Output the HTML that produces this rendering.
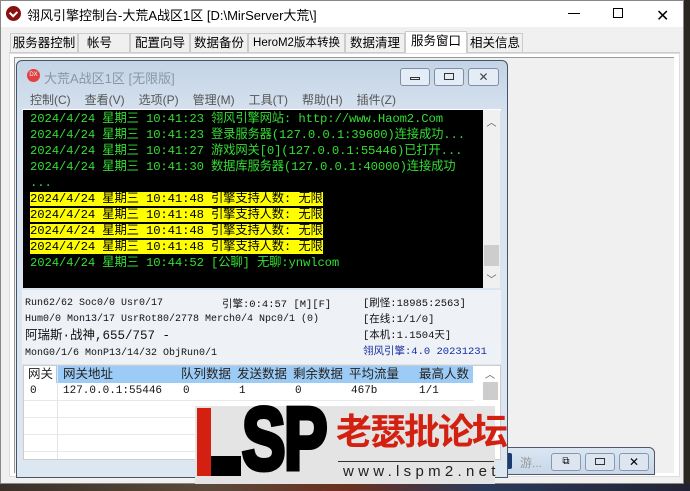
<!DOCTYPE html>
<html><head><meta charset="utf-8"><style>
*{margin:0;padding:0;box-sizing:border-box}
body{width:690px;height:491px;overflow:hidden;background:#2a2620;font-family:"Liberation Sans","Noto Sans CJK SC",sans-serif;position:relative}
.abs{position:absolute}
.mono{font-family:"Liberation Mono","Noto Sans CJK SC",monospace}
.tab{position:absolute;top:33px;height:20px;border:1px solid #ccc;border-bottom:none;font-size:12.5px;white-space:nowrap;text-align:center;line-height:18px}
</style></head><body>
<div class="abs" style="left:0;top:484px;width:690px;height:7px;background:linear-gradient(90deg,#3a3028,#5a4a3a 30%,#6a3020 50%,#2a3a5a 70%,#223)"></div>
<div class="abs" style="left:0;top:0;width:684px;height:484px;background:#f0f0f0;border:1px solid #888"></div>
<div class="abs" style="left:1px;top:1px;width:682px;height:26px;background:#fff"></div>
<div class="abs" style="left:6px;top:6px;width:15px;height:15px;border-radius:50%;background:#8a1010"></div>
<div class="abs" style="left:10px;top:10px;width:7px;height:6px;border-left:2px solid #fff;border-bottom:2px solid #fff;transform:rotate(-45deg)"></div>
<div class="abs" style="left:27px;top:5px;font-size:13px;color:#000">翎风引擎控制台-大荒A战区1区 [D:\MirServer大荒\]</div>
<div class="abs" style="left:568px;top:13px;width:12px;height:1px;background:#000"></div>
<div class="abs" style="left:613px;top:8px;width:10px;height:10px;border:1px solid #000"></div>
<div class="abs" style="left:656px;top:6px;font-size:16px;color:#000">✕</div>
<div class="abs" style="left:9px;top:52px;width:671px;height:1px;background:#ccc"></div>
<div class="tab" style="left:10px;width:68px">服务器控制</div>
<div class="tab" style="left:78px;width:52px;text-align:left;padding-left:8px">帐号</div>
<div class="tab" style="left:130px;width:60px">配置向导</div>
<div class="tab" style="left:190px;width:58px">数据备份</div>
<div class="tab" style="left:248px;width:97px;font-size:11.5px">HeroM2版本转换</div>
<div class="tab" style="left:345px;width:60px">数据清理</div>
<div class="tab" style="left:405px;width:62px;top:31px;height:22px;background:#fff">服务窗口</div>
<div class="tab" style="left:467px;width:56px">相关信息</div>
<div class="abs" style="left:9px;top:53px;width:671px;height:424px;border:1px solid #ddd;background:#fff"></div>
<div class="abs" style="left:14px;top:57px;width:660px;height:416px;border-top:1px solid #999;border-left:1px solid #999;background:#f0f0f0"></div>
<div class="abs" style="left:495px;top:447px;width:160px;height:28px;border:1px solid #556;border-radius:0 6px 0 0;background:linear-gradient(#dbe6f2,#c8d7e8)"></div>
<div class="abs" style="left:500px;top:453px;width:12px;height:16px;background:#1a3a70;border-radius:2px"></div>
<div class="abs" style="left:520px;top:454px;font-size:12px;color:#999">游...</div>
<div class="abs" style="left:551px;top:453px;width:30px;height:18px;border:1px solid #8898b0;border-radius:3px;background:#dde6f0;font-size:10px;text-align:center;line-height:16px">⧉</div>
<div class="abs" style="left:585px;top:453px;width:30px;height:18px;border:1px solid #8898b0;border-radius:3px;background:#dde6f0"></div>
<div class="abs" style="left:595px;top:458px;width:10px;height:7px;border:1px solid #333"></div>
<div class="abs" style="left:619px;top:453px;width:30px;height:18px;border:1px solid #8898b0;border-radius:3px;background:#dde6f0;font-size:12px;text-align:center;line-height:16px">✕</div>
<div class="abs" style="left:16px;top:60px;width:492px;height:418px;border:1px solid #44556a;border-radius:6px 6px 0 0;background:linear-gradient(#c4d4e6,#d8e3ef 60px,#dde7f1)"></div>
<div class="abs" style="left:27px;top:69px;width:13px;height:13px;border-radius:50%;background:#e04040;font-size:6px;color:#fff;text-align:center;line-height:13px">DX</div>
<div class="abs" style="left:44px;top:68px;font-size:13px;color:#8a96a6">大荒A战区1区 [无限版]</div>
<div class="abs" style="left:400px;top:68px;width:30px;height:18px;border:1px solid #7d8ea6;border-radius:3px;background:#e4ecf5"></div>
<div class="abs" style="left:410px;top:77px;width:10px;height:3px;border:1px solid #333"></div>
<div class="abs" style="left:434px;top:68px;width:30px;height:18px;border:1px solid #7d8ea6;border-radius:3px;background:#e4ecf5"></div>
<div class="abs" style="left:444px;top:73px;width:10px;height:7px;border:1px solid #333"></div>
<div class="abs" style="left:468px;top:68px;width:31px;height:18px;border:1px solid #7d8ea6;border-radius:3px;background:#e4ecf5;font-size:12px;text-align:center;line-height:16px;color:#444">✕</div>
<div class="abs" style="left:30px;top:91px;font-size:12px;color:#555;display:flex;gap:14px">
<span>控制(C)</span><span>查看(V)</span><span>选项(P)</span><span>管理(M)</span><span>工具(T)</span><span>帮助(H)</span><span>插件(Z)</span></div>
<div class="abs" style="left:22px;top:109px;width:479px;height:2px;background:#fff"></div>
<div class="abs" style="left:23px;top:110px;width:460px;height:178px;background:#000"></div>
<div class="abs" style="left:483px;top:110px;width:17px;height:178px;background:#f0f0f0;font-size:10px;color:#555;text-align:center"><div style="margin-top:4px">︿</div><div style="position:absolute;top:135px;left:1px;width:15px;height:21px;background:#cdcdcd"></div><div style="position:absolute;bottom:2px;width:17px">﹀</div></div>
<div class="abs mono" style="left:30px;top:111px;font-size:12.3px;letter-spacing:-0.15px;line-height:16px;color:#33dd33;white-space:pre">2024/4/24 星期三 10:41:23 翎风引擎网站: http://www.Haom2.Com
2024/4/24 星期三 10:41:23 登录服务器(127.0.0.1:39600)连接成功...
2024/4/24 星期三 10:41:27 游戏网关[0](127.0.0.1:55446)已打开...
2024/4/24 星期三 10:41:30 数据库服务器(127.0.0.1:40000)连接成功
...
<span style="background:#ffff00;color:#000">2024/4/24 星期三 10:41:48 引擎支持人数: 无限</span>
<span style="background:#ffff00;color:#000">2024/4/24 星期三 10:41:48 引擎支持人数: 无限</span>
<span style="background:#ffff00;color:#000">2024/4/24 星期三 10:41:48 引擎支持人数: 无限</span>
<span style="background:#ffff00;color:#000">2024/4/24 星期三 10:41:48 引擎支持人数: 无限</span>
2024/4/24 星期三 10:44:52 [公聊] 无聊:ynwlcom</div>
<div class="abs" style="left:22px;top:290px;width:479px;height:74px;background:#eef2f6"></div>
<div class="abs mono" style="left:25px;top:296px;font-size:10px;line-height:16px;color:#111;white-space:pre">Run62/62 Soc0/0 Usr0/17
Hum0/0 Mon13/17 UsrRot80/2778 Merch0/4 Npc0/1 (0)
<span style="font-size:12.5px">阿瑞斯·战神,655/757 -</span>
MonG0/1/6 MonP13/14/32 ObjRun0/1</div>
<div class="abs mono" style="left:222px;top:296px;font-size:10.5px;color:#111">引擎:0:4:57 [M][F]</div>
<div class="abs mono" style="left:363px;top:296px;font-size:10.5px;line-height:16px;color:#111;white-space:pre">[刷怪:18985:2563]
[在线:1/1/0]
[本机:1.1504天]
<span style="color:#1a2ea0">翎风引擎:4.0 20231231</span></div>
<div class="abs" style="left:23px;top:365px;width:478px;height:95px;background:#fff;border:1px solid #ccc"></div>
<div class="abs" style="left:56px;top:366px;width:417px;height:17px;background:#9ccbf5"></div>
<div class="abs" style="left:24px;top:366px;font-size:12.5px;color:#222;display:flex;height:17px;line-height:17px;white-space:nowrap">
<span style="width:33px;padding-left:4px">网关</span><span style="width:122px;padding-left:6px">网关地址</span><span style="width:56px;padding-left:2px">队列数据</span><span style="width:56px;padding-left:2px">发送数据</span><span style="width:56px;padding-left:2px">剩余数据</span><span style="width:66px;padding-left:2px">平均流量</span><span style="width:60px;padding-left:6px">最高人数</span></div>
<div class="abs mono" style="left:24px;top:383px;font-size:11px;display:flex;height:17px;line-height:17px;color:#111">
<span style="width:33px;padding-left:6px">0</span><span style="width:122px;padding-left:6px">127.0.0.1:55446</span><span style="width:56px;padding-left:4px">0</span><span style="width:56px;padding-left:4px">1</span><span style="width:56px;padding-left:4px">0</span><span style="width:66px;padding-left:4px">467b</span><span style="width:60px;padding-left:6px">1/1</span></div>
<div class="abs" style="left:57px;top:366px;width:1px;height:93px;background:#e4e4e4"></div>
<div class="abs" style="left:24px;top:400px;width:450px;height:1px;background:#e8e8e8"></div>
<div class="abs" style="left:24px;top:417px;width:450px;height:1px;background:#e8e8e8"></div>
<div class="abs" style="left:24px;top:434px;width:450px;height:1px;background:#e8e8e8"></div>
<div class="abs" style="left:24px;top:451px;width:450px;height:1px;background:#e8e8e8"></div>
<div class="abs" style="left:483px;top:382px;width:15px;height:18px;background:#cdcdcd"></div>
<div class="abs" style="left:485px;top:366px;font-size:10px;color:#555">︿</div>
<div class="abs" style="left:195px;top:406px;width:300px;height:78px;background:#e4e4e4"></div>
<div class="abs" style="left:197px;top:408px;width:14px;height:68px;background:#d42010"></div>
<div class="abs" style="left:211px;top:456px;width:30px;height:20px;background:#000"></div>
<div class="abs" style="left:242px;top:394px;font-size:88px;font-weight:bold;color:#000;letter-spacing:-2px;transform:scaleX(0.74);transform-origin:left;line-height:90px;-webkit-text-stroke:5px #000;font-family:'Liberation Sans',sans-serif">SP</div>
<div class="abs" style="left:336px;top:404px;font-size:36px;font-weight:bold;color:#d42010;letter-spacing:-2px;line-height:50px;font-family:'Noto Sans CJK SC',sans-serif">老瑟批论坛</div>
<div class="abs" style="left:338px;top:461px;width:156px;height:1px;background:#333"></div>
<div class="abs" style="left:343px;top:463px;font-size:15px;color:#222;letter-spacing:4.3px">www.lspm2.net</div>
</body></html>
